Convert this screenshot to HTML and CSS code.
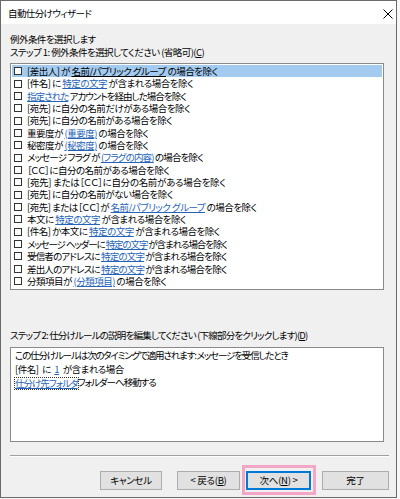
FILE: index.html
```html
<!DOCTYPE html>
<html lang="ja">
<head>
<meta charset="utf-8">
<title>自動仕分けウィザード</title>
<link rel="stylesheet" href="styles.css">
</head>
<body>
<div class="window">
  <div class="titlebar">
    <span class="title">自動仕分けウィザード</span>
    <svg class="close" width="10" height="10" viewBox="0 0 10 10"><path d="M0.5 0.5 L9.5 9.5 M9.5 0.5 L0.5 9.5" stroke="#000" stroke-width="1" fill="none"/></svg>
  </div>
  <div class="content">
    <div class="line">例外条件を選択します</div>
    <div class="line">ステップ 1: 例外条件を選択してください (省略可)(<u>C</u>)</div>
    <div class="listbox">
      <div class="row selected"><span class="cb"></span><span class="rt">[差出人] が <a class="lk dark">名前/パブリック グループ</a> の場合を除く</span></div>
      <div class="row"><span class="cb"></span><span class="rt">[件名] に <a class="lk">特定の文字</a> が含まれる場合を除く</span></div>
      <div class="row"><span class="cb"></span><span class="rt tight"><a class="lk">指定された</a> アカウントを経由した場合を除く</span></div>
      <div class="row"><span class="cb"></span><span class="rt">[宛先] に自分の名前だけがある場合を除く</span></div>
      <div class="row"><span class="cb"></span><span class="rt">[宛先] に自分の名前がある場合を除く</span></div>
      <div class="row"><span class="cb"></span><span class="rt">重要度が <a class="lk">(重要度)</a> の場合を除く</span></div>
      <div class="row"><span class="cb"></span><span class="rt">秘密度が <a class="lk">(秘密度)</a> の場合を除く</span></div>
      <div class="row"><span class="cb"></span><span class="rt snug">メッセージ フラグ が <a class="lk">(フラグの内容)</a> の場合を除く</span></div>
      <div class="row"><span class="cb"></span><span class="rt">［ＣＣ］に自分の名前がある場合を除く</span></div>
      <div class="row"><span class="cb"></span><span class="rt loose">[宛先] または［ＣＣ］に自分の名前がある場合を除く</span></div>
      <div class="row"><span class="cb"></span><span class="rt">[宛先] に自分の名前がない場合を除く</span></div>
      <div class="row"><span class="cb"></span><span class="rt">[宛先] または［ＣＣ］が <a class="lk">名前/パブリック グループ</a> の場合を除く</span></div>
      <div class="row"><span class="cb"></span><span class="rt">本文に <a class="lk">特定の文字</a> が含まれる場合を除く</span></div>
      <div class="row"><span class="cb"></span><span class="rt">[件名] か本文に <a class="lk">特定の文字</a> が含まれる場合を除く</span></div>
      <div class="row"><span class="cb"></span><span class="rt tighter">メッセージ ヘッダーに <a class="lk">特定の文字</a> が含まれる場合を除く</span></div>
      <div class="row"><span class="cb"></span><span class="rt snug">受信者のアドレスに <a class="lk">特定の文字</a> が含まれる場合を除く</span></div>
      <div class="row"><span class="cb"></span><span class="rt snug">差出人のアドレスに <a class="lk">特定の文字</a> が含まれる場合を除く</span></div>
      <div class="row"><span class="cb"></span><span class="rt">分類項目が <a class="lk">(分類項目)</a> の場合を除く</span></div>
    </div>
    <div class="line step2">ステップ 2: 仕分けルールの説明を編集してください (下線部分をクリックします)(<u>D</u>)</div>
    <div class="descbox">
      <div class="dline first">この仕分けルールは次のタイミングで適用されます: メッセージを受信したとき</div>
      <div class="dline second">[件名] に <a class="lk">1</a> が含まれる場合</div>
      <div class="dline"><a class="lk focus">仕分け先フォルダ</a>フォルダーへ移動する</div>
    </div>
    <div class="separator"></div>
    <div class="buttons">
      <button class="btn cancel">キャンセル</button>
      <button class="btn back">&lt; 戻る(<u>B</u>)</button>
      <div class="nextwrap"><button class="btn next">次へ(<u>N</u>) &gt;</button></div>
      <button class="btn done">完了</button>
    </div>
  </div>
</div>
</body>
</html>
```
FILE: styles.css
```css
html, body {
  margin: 0;
  padding: 0;
  background: #f7f7f7;
}
body {
  width: 400px;
  height: 499px;
  overflow: hidden;
  font-family: "Noto Sans CJK JP", "Noto Sans", sans-serif;
  font-size: 9.5px;
  font-feature-settings: "palt";
  color: #000;
}
.window {
  box-sizing: border-box;
  width: 397px;
  height: 498px;
  border: 1px solid #6a6a6a;
  background: #f0f0f0;
  display: flex;
  flex-direction: column;
}
.titlebar {
  height: 23px;
  background: #fff;
  display: flex;
  align-items: center;
  justify-content: space-between;
  padding: 0 3px 0 7px;
  flex: none;
}
.title {
  font-size: 9.5px;
  line-height: 13px;
  letter-spacing: -0.6px;
  padding-top: 1px;
}
.close {
  display: block;
  margin-top: 2px;
}
.content {
  padding: 9px 7px 0 9px;
  display: flex;
  flex-direction: column;
}
.line {
  line-height: 13px;
  height: 13px;
  white-space: nowrap;
  letter-spacing: -0.55px;
}
.listbox {
  box-sizing: border-box;
  margin-top: 4px;
  width: 374px;
  height: 227px;
  background: #fff;
  border: 1px solid #8a8a8a;
  padding: 1px;
}
.row {
  height: 12.35px;
  display: flex;
  align-items: center;
  white-space: nowrap;
  padding-left: 2px;
}
.rt {
  display: block;
  height: 12.35px;
  line-height: 12.35px;
  overflow: hidden;
  letter-spacing: -0.5px;
}
.rt.loose { letter-spacing: -0.3px; }
.rt.snug { letter-spacing: -0.82px; }
.rt.tight { letter-spacing: -0.95px; }
.rt.tighter { letter-spacing: -1.1px; }
.row.selected {
  background: #a3cbf0;
}
.cb {
  box-sizing: border-box;
  width: 8px;
  height: 8px;
  border: 1px solid #333;
  background: #fff;
  margin-right: 5px;
  flex: none;
}
.lk {
  color: #2563b8;
  text-decoration: underline;
}
.lk.dark {
  color: #000;
}
.step2 {
  margin-top: 39px;
  letter-spacing: -0.8px;
}
.descbox {
  box-sizing: border-box;
  margin-top: 5px;
  width: 374px;
  height: 95px;
  background: #fff;
  border: 1px solid #8a8a8a;
  padding: 1px 4px;
}
.dline {
  line-height: 13.5px;
  height: 13.5px;
  white-space: nowrap;
  letter-spacing: -1px;
}
.dline.first {
  letter-spacing: -1.15px;
}
.dline.second {
  letter-spacing: -0.5px;
  word-spacing: 2px;
}
.focus {
  display: inline-block;
  line-height: 11px;
  height: 11px;
  outline: 1px dotted #333;
  outline-offset: 0;
  vertical-align: -1px;
}
.separator {
  margin-top: 13px;
  width: 379px;
  height: 0;
  border-top: 1px solid #a0a0a0;
  border-bottom: 1px solid #fff;
}
.buttons {
  margin-top: 14px;
  display: flex;
  justify-content: flex-end;
  align-items: center;
}
.btn {
  box-sizing: border-box;
  height: 19px;
  padding: 0;
  font-family: inherit;
  font-size: 9.5px;
  font-feature-settings: "palt";
  letter-spacing: -0.3px;
  line-height: 17px;
  background: #e1e1e1;
  border: 1px solid #adadad;
  color: #000;
  text-align: center;
  border-radius: 0;
}
.cancel { width: 62px; }
.back { width: 63px; margin-left: 15px; }
.nextwrap {
  position: relative;
  margin-left: 6px;
  display: flex;
}
.nextwrap::after {
  content: "";
  position: absolute;
  left: -4px;
  right: -5px;
  top: -6px;
  bottom: -5px;
  border: 3px solid #f4a6c6;
  pointer-events: none;
}
.next {
  width: 65px;
  border-color: #0078d7;
  box-shadow: inset 0 0 0 1px #0078d7;
}
.done { width: 67px; margin-left: 11px; }
```
